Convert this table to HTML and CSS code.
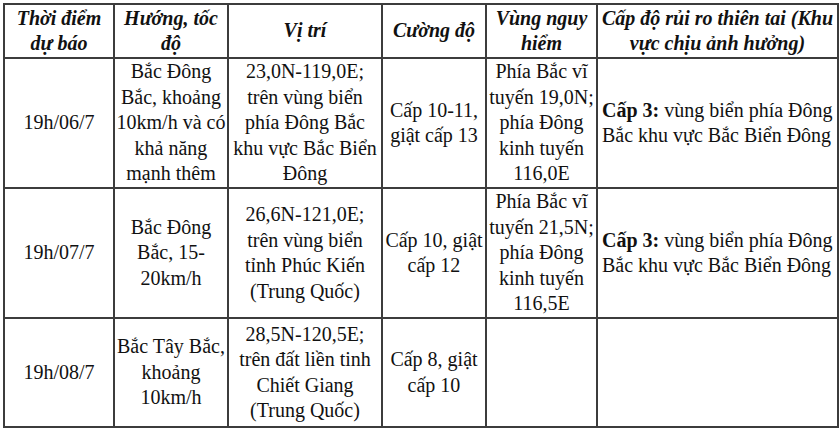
FILE: index.html
```html
<!DOCTYPE html>
<html lang="vi">
<head>
<meta charset="utf-8">
<link rel="stylesheet" href="styles.css">
</head>
<body>
<table class="forecast">
  <colgroup>
    <col class="c1"><col class="c2"><col class="c3"><col class="c4"><col class="c5"><col class="c6">
  </colgroup>
  <thead>
    <tr class="head">
      <th>Thời điểm dự báo</th>
      <th>Hướng, tốc độ</th>
      <th>Vị trí</th>
      <th>Cường độ</th>
      <th>Vùng nguy hiểm</th>
      <th>Cấp độ rủi ro thiên tai (Khu vực chịu ảnh hưởng)</th>
    </tr>
  </thead>
  <tbody>
    <tr class="r1">
      <td>19h/06/7</td>
      <td>Bắc Đông Bắc, khoảng 10km/h và có khả năng mạnh thêm</td>
      <td>23,0N-119,0E; trên vùng biển phía Đông Bắc khu vực Bắc Biển Đông</td>
      <td>Cấp 10-11, giật cấp 13</td>
      <td>Phía Bắc vĩ tuyến 19,0N; phía Đông kinh tuyến 116,0E</td>
      <td class="risk"><b>Cấp 3:</b> vùng biển phía Đông Bắc khu vực Bắc Biển Đông</td>
    </tr>
    <tr class="r2">
      <td>19h/07/7</td>
      <td>Bắc Đông Bắc, 15-20km/h</td>
      <td>26,6N-121,0E; trên vùng biển tỉnh Phúc Kiến (Trung Quốc)</td>
      <td>Cấp 10, giật cấp 12</td>
      <td>Phía Bắc vĩ tuyến 21,5N; phía Đông kinh tuyến 116,5E</td>
      <td class="risk"><b>Cấp 3:</b> vùng biển phía Đông Bắc khu vực Bắc Biển Đông</td>
    </tr>
    <tr class="r3">
      <td>19h/08/7</td>
      <td>Bắc Tây Bắc, khoảng 10km/h</td>
      <td>28,5N-120,5E; trên đất liền tinh Chiết Giang (Trung Quốc)</td>
      <td>Cấp 8, giật cấp 10</td>
      <td></td>
      <td class="risk"></td>
    </tr>
  </tbody>
</table>
</body>
</html>
```
FILE: styles.css
```css
html, body {
  margin: 0;
  padding: 0;
  background: #ffffff;
}

.forecast {
  margin: 3px 0 0 3px;
  width: 834px;
  border-collapse: collapse;
  table-layout: fixed;
  font-family: "Liberation Serif", "Times New Roman", serif;
  font-size: 20px;
  line-height: 25.5px;
  color: #111111;
  border: 2px solid #4a4a4a;
}

.c1 { width: 110px; }
.c2 { width: 114px; }
.c3 { width: 154px; }
.c4 { width: 104px; }
.c5 { width: 111px; }
.c6 { width: 241px; }

.forecast th,
.forecast td {
  border: 2px solid #3c3c3c;
  padding: 0 1px;
  text-align: center;
  vertical-align: middle;
}

.forecast th {
  font-weight: bold;
  font-style: italic;
}

.forecast td.risk {
  text-align: left;
  padding-left: 4px;
}

.head { height: 54px; }
.r1 { height: 130px; }
.r2 { height: 130px; }
.r3 { height: 109px; }
```
